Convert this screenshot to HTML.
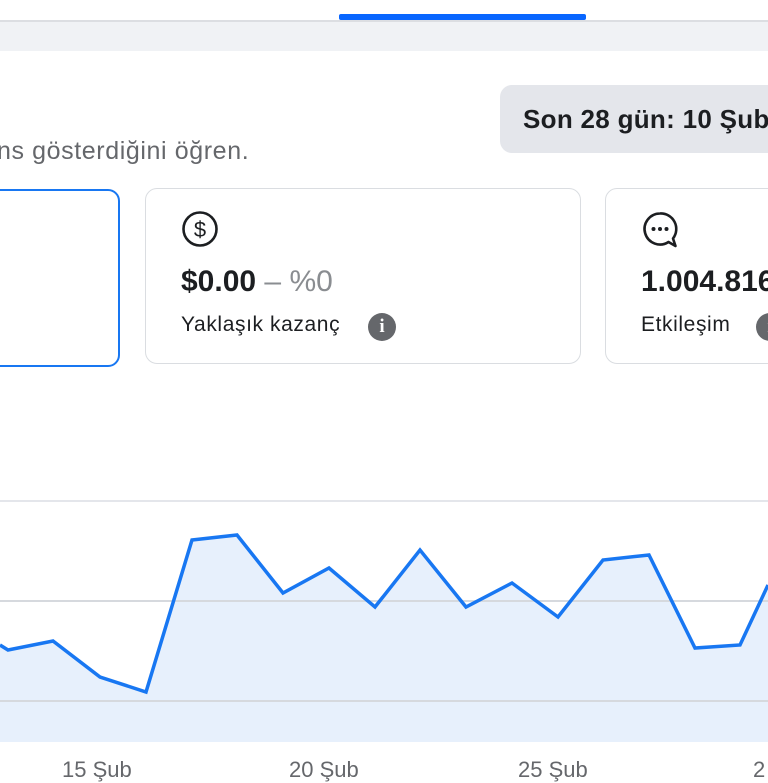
<!DOCTYPE html>
<html><head><meta charset="utf-8"><style>
*{margin:0;padding:0;box-sizing:border-box}
body{width:768px;height:768px;overflow:hidden;background:#fff;font-family:"Liberation Sans",sans-serif;position:relative;color:#1c1e21}
.abs{position:absolute}
.card{position:absolute;border:1px solid #dadde1;border-radius:12px;background:#fff}
.val{position:absolute;font-size:30px;font-weight:bold;white-space:nowrap;letter-spacing:0px}
.lbl{position:absolute;font-size:21px;white-space:nowrap;color:#1c1e21;letter-spacing:0.6px}
.info{position:absolute;width:28px;height:28px;border-radius:50%;background:#65676b;color:#fff;font-weight:bold;font-size:19px;text-align:center;line-height:28px;font-family:"Liberation Serif",serif}
.ax{position:absolute;top:757px;font-size:22px;color:#65676b;white-space:nowrap}
</style></head><body>
<div class="abs" style="left:0;top:0;width:768px;height:20px;background:#fff"></div>
<div class="abs" style="left:339px;top:14px;width:247px;height:6px;background:#0866ff;border-radius:2px"></div>
<div class="abs" style="left:0;top:20px;width:768px;height:2px;background:#dcdee2"></div>
<div class="abs" style="left:0;top:22px;width:768px;height:29px;background:#f0f2f5"></div>

<div class="abs" style="left:500px;top:85px;width:290px;height:68px;background:#e4e6eb;border-radius:12px"></div>
<div class="abs" style="left:523px;top:104px;font-size:26px;font-weight:bold;white-space:nowrap;letter-spacing:0.3px">Son 28 gün: 10 Şub</div>
<div class="abs" style="left:-3px;top:137px;font-size:25px;color:#65676b;white-space:nowrap;letter-spacing:0.6px">ns gösterdiğini öğren.</div>

<div class="abs" style="left:-20px;top:189px;width:140px;height:178px;border:2px solid #1877f2;border-radius:12px"></div>

<div class="card" style="left:145px;top:188px;width:436px;height:176px"></div>
<svg class="abs" style="left:181px;top:210px" width="38" height="38" viewBox="0 0 38 38"><circle cx="19" cy="19" r="16.5" fill="none" stroke="#1c1e21" stroke-width="2.6"/><text x="19" y="27" text-anchor="middle" font-family="Liberation Sans" font-size="22" fill="#1c1e21">$</text></svg>
<div class="val" style="left:181px;top:265px">$0.00 <span style="color:#8a8d91;font-weight:normal">– %0</span></div>
<div class="lbl" style="left:181px;top:313px">Yaklaşık kazanç</div>
<div class="info" style="left:368px;top:313px">i</div>

<div class="card" style="left:605px;top:188px;width:200px;height:176px"></div>
<svg class="abs" style="left:641px;top:210px" width="40" height="40" viewBox="0 0 40 40"><path d="M19 3.5a15.5 15.5 0 1 0 8.5 28.5l7 4-2.5-7.5A15.5 15.5 0 0 0 19 3.5z" fill="none" stroke="#1c1e21" stroke-width="2.6" stroke-linejoin="round"/><circle cx="12.5" cy="19" r="2" fill="#1c1e21"/><circle cx="19" cy="19" r="2" fill="#1c1e21"/><circle cx="25.5" cy="19" r="2" fill="#1c1e21"/></svg>
<div class="val" style="left:641px;top:265px">1.004.816</div>
<div class="lbl" style="left:641px;top:313px">Etkileşim</div>
<div class="info" style="left:756px;top:313px">i</div>

<svg class="abs" style="left:0;top:0" width="768" height="768">
<line x1="0" y1="501" x2="768" y2="501" stroke="#e4e6eb" stroke-width="2"/>
<polygon points="0,645 8,650 53,641 100,677 146,692 192,540 237,535 283,593 329,568 375,607 420,550 466,607 512,583 558,617 603,560 649,555 695,648 740,645 768,585 768,742 0,742" fill="#e7f0fc"/>
<line x1="0" y1="601" x2="768" y2="601" stroke="#d6d9de" stroke-width="2"/>
<line x1="0" y1="701" x2="768" y2="701" stroke="#d6d9de" stroke-width="2"/>
<polyline points="0,645 8,650 53,641 100,677 146,692 192,540 237,535 283,593 329,568 375,607 420,550 466,607 512,583 558,617 603,560 649,555 695,648 740,645 768,585" fill="none" stroke="#1877f2" stroke-width="3.5" stroke-linejoin="miter"/>
</svg>
<div class="ax" style="left:62px">15 Şub</div>
<div class="ax" style="left:289px">20 Şub</div>
<div class="ax" style="left:518px">25 Şub</div>
<div class="ax" style="left:753px">2</div>
</body></html>
